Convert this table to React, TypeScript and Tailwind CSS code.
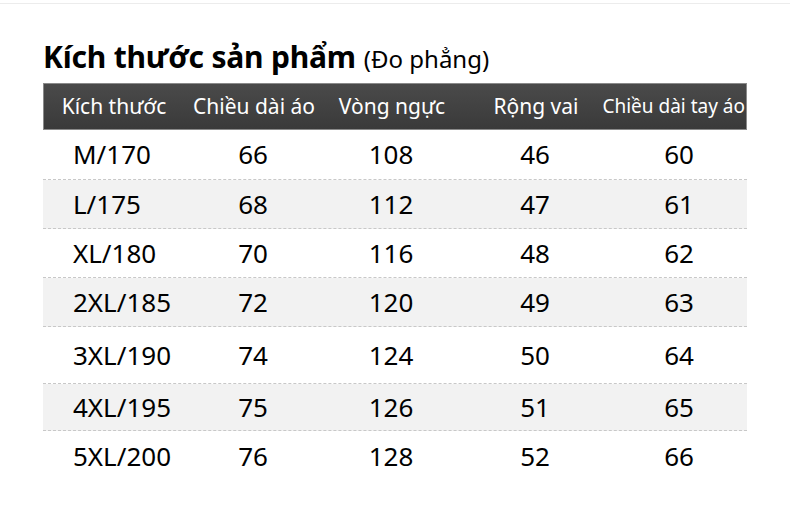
const headers = ["Kích thước", "Chiều dài áo", "Vòng ngực", "Rộng vai", "Chiều dài tay áo"];

const rows: { h: string; cells: string[] }[] = [
  { h: "h-[50px]", cells: ["M/170", "66", "108", "46", "60"] },
  { h: "h-[49px]", cells: ["L/175", "68", "112", "47", "61"] },
  { h: "h-[49px]", cells: ["XL/180", "70", "116", "48", "62"] },
  { h: "h-[49px]", cells: ["2XL/185", "72", "120", "49", "63"] },
  { h: "h-[57px]", cells: ["3XL/190", "74", "124", "50", "64"] },
  { h: "h-[47px]", cells: ["4XL/195", "75", "126", "51", "65"] },
  { h: "h-[50px]", cells: ["5XL/200", "76", "128", "52", "66"] },
];

const cols = "grid grid-cols-[140px_140px_136px_152px_136px]";

export default function App() {
  return (
    <div
      className="h-[513px] w-[790px] overflow-hidden bg-white text-black"
      style={{ fontFamily: '"Noto Sans", "Open Sans", sans-serif' }}
    >
      <div className="h-[4px] border-b border-[#ececec]" />
      <div className="pl-[43px] pt-[38px]">
        <h1 className="flex items-baseline gap-[8px] leading-none">
          <span className="text-[30px] font-bold tracking-[-0.2px]">Kích thước sản phẩm</span>
          <span className="text-[24px] font-normal">(Đo phẳng)</span>
        </h1>

        <div className="mt-[11px] w-[704px]">
          <div className={`${cols} h-[47px] items-center border border-[#8a8a8a] bg-gradient-to-b from-[#4a4a4a] to-[#3a3a3a] text-white`}>
            {headers.map((t, i) =>
              i === 4 ? (
                <div key={t} className="flex justify-end pr-[3px] text-[19px] whitespace-nowrap">
                  <span className="shrink-0">{t}</span>
                </div>
              ) : (
                <div key={t} className="whitespace-nowrap text-center text-[21px]">
                  {t}
                </div>
              )
            )}
          </div>

          {rows.map((r, ri) => (
            <div
              key={r.cells[0]}
              className={`${cols} ${r.h} items-center text-[26px] ${
                ri % 2 === 1 ? "bg-[#f2f2f2]" : ""
              } ${ri < rows.length - 1 ? "border-b border-dashed border-[#c8c8c8]" : ""}`}
            >
              {r.cells.map((c, ci) => (
                <div key={ci} className={ci === 0 ? "pl-[30px] text-left" : "text-center"}>
                  {c}
                </div>
              ))}
            </div>
          ))}
        </div>
      </div>
    </div>
  );
}
